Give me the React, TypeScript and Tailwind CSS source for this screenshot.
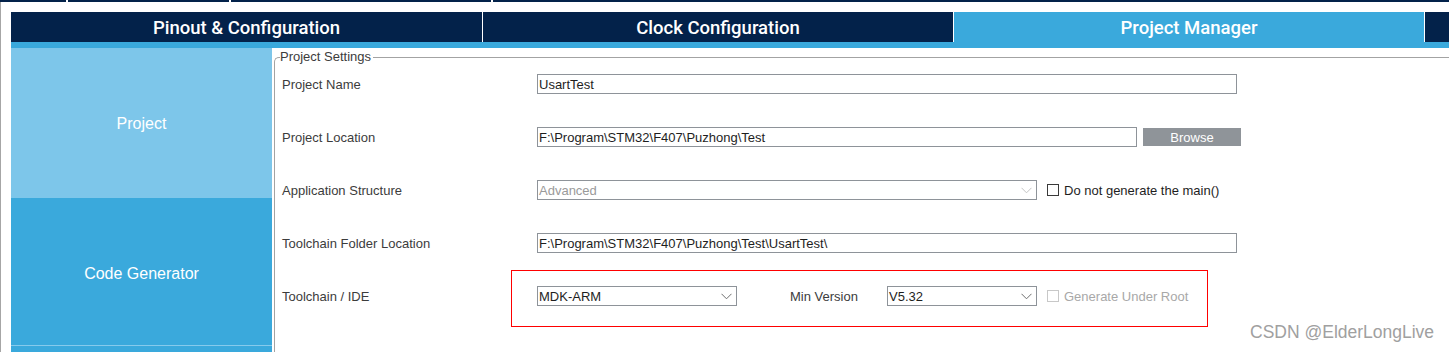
import React from "react";

const Chevron = ({ light }: { light?: boolean }) => (
  <svg width="11" height="7" viewBox="0 0 11 7" className="shrink-0">
    <path d="M0.5 0.8 L5.5 5.8 L10.5 0.8" fill="none" stroke={light ? "#c4c4c4" : "#6e6e6e"} strokeWidth="1" />
  </svg>
);

const TextInput = ({ value, w }: { value: string; w: string }) => (
  <div className={`${w} h-[20px] border border-[#8e9399] bg-white flex items-center pl-[1px] text-[13px] text-[#1e1e1e] leading-none whitespace-nowrap overflow-hidden`}>
    {value}
  </div>
);

const Select = ({ value, w, disabled }: { value: string; w: string; disabled?: boolean }) => (
  <div className={`${w} h-[20px] border border-[#8e9399] bg-white flex items-center justify-between pl-[1px] pr-[4px] text-[13px] leading-none whitespace-nowrap ${disabled ? "text-[#9a9a9a]" : "text-[#1e1e1e]"}`}>
    <span>{value}</span>
    <Chevron light={disabled} />
  </div>
);

const Check = ({ label, disabled }: { label: string; disabled?: boolean }) => (
  <div className="flex items-center ml-[10px]">
    <div className={`w-[12px] h-[12px] border bg-white ${disabled ? "border-[#c8c8c8]" : "border-[#3a3a3a]"}`} />
    <span className={`ml-[5px] text-[13px] leading-none whitespace-nowrap ${disabled ? "text-[#a8a8a8]" : "text-[#1e1e1e]"}`}>{label}</span>
  </div>
);

const Row = ({ label, children, first }: { label: string; children: React.ReactNode; first?: boolean }) => (
  <div className={`flex items-center h-[40px] ${first ? "" : "mt-[13px]"}`}>
    <div className="w-[255px] shrink-0 text-[13px] text-[#3c3c3c] leading-none whitespace-nowrap">{label}</div>
    <div className="flex items-center">{children}</div>
  </div>
);

export default function App() {
  return (
    <div className="relative w-[1449px] h-[352px] bg-white overflow-hidden font-['Liberation_Sans',Arial,sans-serif]">
      {/* top strip of previous tab bar */}
      <div className="h-[2px] flex">
        <div className="w-[66px] bg-[#03224a]" />
        <div className="w-[2px] bg-white" />
        <div className="w-[161px] bg-[#03224a]" />
        <div className="w-[2px] bg-white" />
        <div className="w-[260px] bg-[#03224a]" />
        <div className="w-[2px] bg-white" />
        <div className="flex-1 bg-[#03224a]" />
      </div>
      <div className="flex h-[350px]">
        <div className="w-[1px] bg-[#a6a6a6]" />
        <div className="w-[10px]" />
        <div className="flex-1 flex flex-col pt-[10px] min-w-0">
          {/* tab bar */}
          <div className="flex h-[30px] text-white text-[18.5px] font-medium leading-none font-['Roboto','Liberation_Sans',sans-serif]">
            <div className="w-[471px] bg-[#03224a] flex items-center justify-center pt-[2px]">Pinout &amp; Configuration</div>
            <div className="w-[1px] bg-white" />
            <div className="w-[470px] bg-[#03224a] flex items-center justify-center pt-[2px]">Clock Configuration</div>
            <div className="w-[1px] bg-white" />
            <div className="w-[470px] bg-[#3aa9dc] flex items-center justify-center pt-[2px]">Project Manager</div>
            <div className="w-[1px] bg-white" />
            <div className="flex-1 bg-[#03224a]" />
          </div>
          <div className="h-[6px] bg-[#3aa9dc]" />
          {/* body */}
          <div className="flex flex-1 min-h-0">
            <div className="w-[261px] shrink-0 flex flex-col">
              <div className="h-[150px] bg-[#7dc6ea] flex items-center justify-center text-white text-[16px] leading-none pt-[1px]">
                Project
              </div>
              <div className="h-[147px] bg-[#3aa9dc] flex items-center justify-center text-white text-[16px] leading-none pt-[4px]">
                Code Generator
              </div>
              <div className="h-[1px] bg-[#86caec]" />
              <div className="flex-1 bg-[#3aa9dc]" />
            </div>
            <div className="w-[2px] shrink-0" />
            <fieldset className="flex-1 min-w-0 mt-[2px] border-0 border-t border-l border-[#a3a3a3] rounded-tl-[5px] pl-[5px] m-0 -mr-[40px]">
              <legend className="text-[13px] leading-[14px] text-[#3c3c3c] pr-[2px] whitespace-nowrap">Project Settings</legend>
              <div className="pl-[2px]">
                <Row label="Project Name" first>
                  <TextInput value="UsartTest" w="w-[700px]" />
                </Row>
                <Row label="Project Location">
                  <TextInput value="F:\Program\STM32\F407\Puzhong\Test" w="w-[600px]" />
                  <div className="ml-[6px] w-[98px] h-[18px] bg-[#8f9499] flex items-center justify-center text-white text-[13px] leading-none">
                    Browse
                  </div>
                </Row>
                <Row label="Application Structure">
                  <Select value="Advanced" w="w-[500px]" disabled />
                  <Check label="Do not generate the main()" />
                </Row>
                <Row label="Toolchain Folder Location">
                  <TextInput value="F:\Program\STM32\F407\Puzhong\Test\UsartTest\" w="w-[700px]" />
                </Row>
                <Row label="Toolchain / IDE">
                  <Select value="MDK-ARM" w="w-[200px]" />
                  <div className="ml-[53px] w-[97px] text-[13px] text-[#3c3c3c] leading-none whitespace-nowrap">Min Version</div>
                  <Select value="V5.32" w="w-[150px]" />
                  <Check label="Generate Under Root" disabled />
                </Row>
              </div>
            </fieldset>
          </div>
        </div>
      </div>
      {/* red annotation box */}
      <div className="absolute left-[511px] top-[270px] w-[697px] h-[57px] border border-[#ff0000] pointer-events-none" />
      {/* watermark */}
      <div className="absolute left-[1250px] top-[322px] text-[17.5px] leading-[20px] text-[#a0a0a0] whitespace-nowrap">
        CSDN @ElderLongLive
      </div>
    </div>
  );
}
